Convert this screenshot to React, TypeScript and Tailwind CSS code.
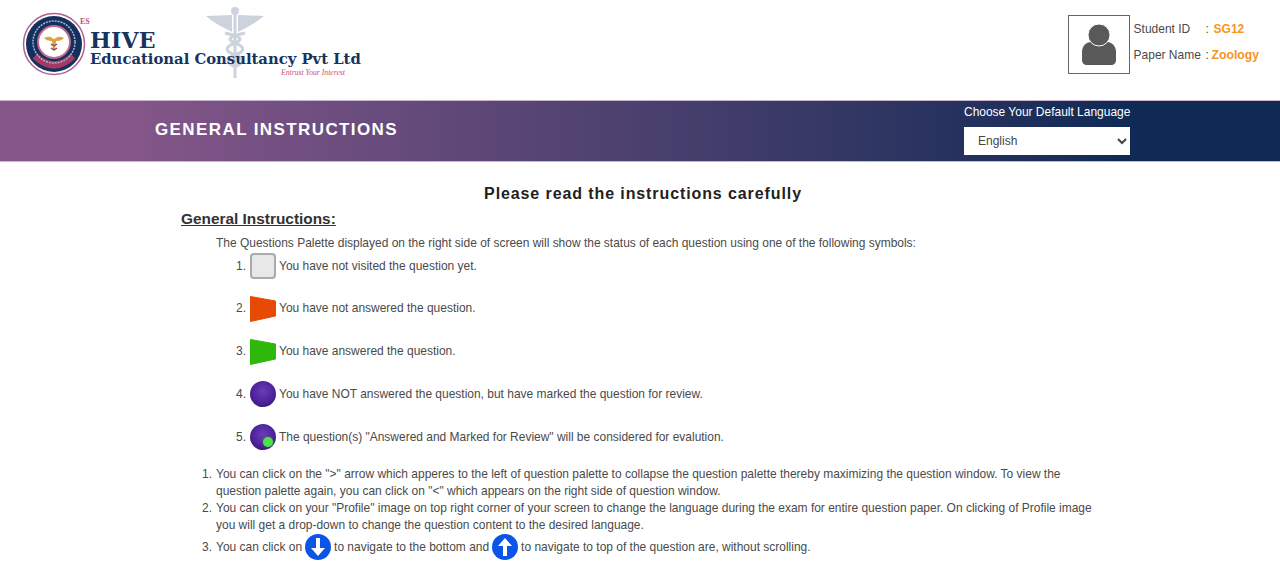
const symbols = [
  { icon: "blank", text: "You have not visited the question yet." },
  { icon: "red", text: "You have not answered the question." },
  { icon: "green", text: "You have answered the question." },
  { icon: "purple", text: "You have NOT answered the question, but have marked the question for review." },
  { icon: "purpleDot", text: 'The question(s) "Answered and Marked for Review" will be considered for evalution.' },
];

const Flag = ({ color }: { color: string }) => (
  <svg width="26" height="26" viewBox="0 0 26 26" className="shrink-0">
    <polygon points="0.5,0.5 25.5,5 25.5,20 0.5,25.5" fill={color} stroke={color} strokeLinejoin="round" />
  </svg>
);

const Ball = ({ dot }: { dot?: boolean }) => (
  <div className="relative h-[26px] w-[26px] shrink-0 rounded-full bg-[radial-gradient(circle_at_50%_40%,#6a3db8,#4a1f96_60%,#2a0f5c)]">
    {dot && (
      <div className="absolute bottom-[3px] right-[3px] h-[10px] w-[10px] rounded-full bg-[#4fe04f] shadow-[0_0_2px_#2f9f3f]" />
    )}
  </div>
);

const SymbolIcon = ({ icon }: { icon: string }) => {
  if (icon === "blank")
    return (
      <div className="h-[26px] w-[26px] shrink-0 rounded-[4px] border-2 border-[#aaaaaa] bg-[#e8e8e8]" />
    );
  if (icon === "red") return <Flag color="#e64a05" />;
  if (icon === "green") return <Flag color="#2eb80c" />;
  return <Ball dot={icon === "purpleDot"} />;
};

const Arrow = ({ up }: { up?: boolean }) => (
  <svg width="26" height="26" viewBox="0 0 26 26" className="mx-[3px] shrink-0">
    <circle cx="13" cy="13" r="13" fill="#0a55e8" />
    {up ? (
      <path d="M13 4l7 8h-5v10h-4V12H6z" fill="#fff" />
    ) : (
      <path d="M13 22l7-8h-5V4h-4v10H6z" fill="#fff" />
    )}
  </svg>
);

const Logo = () => (
  <div className="relative h-[100px] w-[400px] shrink-0">
    <svg width="64" height="64" viewBox="0 0 64 64" className="absolute left-[22px] top-[12px]">
      <circle cx="32" cy="32" r="30.5" fill="#fff" stroke="#b0608f" strokeWidth="1.5" />
      <circle cx="32" cy="32" r="28" fill="#14305e" />
      <path d="M13 44Q32 62 51 44" fill="none" stroke="#a33a63" strokeWidth="7" />
      <circle cx="32" cy="30" r="21" fill="none" stroke="#aab3c8" strokeWidth="1.5" strokeDasharray="2 1" />
      <circle cx="32" cy="30" r="17" fill="#c06a90" />
      <circle cx="32" cy="30" r="15" fill="#fff" />
      <path d="M22 26c6-3 8 0 10 1 2-1 4-4 10-1-3 3-6 3-8 3l-1 10h-2l-1-10c-2 0-5 0-8-3z" fill="#d8a63a" />
      <path d="M29 32c2 2 4 2 6 0M29 36c2 2 4 2 6 0" fill="none" stroke="#8a4a90" strokeWidth="1.5" />
    </svg>
    <span className="absolute left-[80px] top-[17px] font-['Liberation_Serif',serif] text-[8px] font-bold leading-[10px] text-[#c9517f]">
      ES
    </span>
    <svg width="60" height="74" viewBox="0 0 60 74" className="absolute left-[205px] top-[6px]">
      <path d="M1 10L27 9V26C19 22 9 17 1 10zM59 10L33 9V26C41 22 51 17 59 10z" fill="#ccd3dc" />
      <g fill="none" stroke="#ccd3dc">
        <path d="M30 6v66" strokeWidth="3" />
        <path d="M20 27c14 3 20 6 10 10s-11 8 0 12 8 8 0 12M40 27c-14 3-20 6-10 10s11 8 0 12-8 8 0 12" strokeWidth="3" />
      </g>
      <circle cx="30" cy="5" r="4" fill="#ccd3dc" />
    </svg>
    <div className="absolute left-[90px] top-[29px] font-['DejaVu_Serif',serif] font-bold text-[#17335f]">
      <div className="text-[22px] leading-[22px] tracking-[0.2px]">HIVE</div>
      <div className="whitespace-nowrap text-[14.8px] leading-[15px]">
        Educational Consultancy Pvt Ltd
      </div>
    </div>
    <span className="absolute left-[281px] top-[68px] font-['Liberation_Serif',serif] text-[7.7px] italic leading-[10px] text-[#c9517f]">
      Entrust Your Interest
    </span>
  </div>
);

export default function App() {
  return (
    <div className="h-[565px] overflow-hidden bg-white font-['Liberation_Sans',Arial,sans-serif] text-[11.97px] leading-[17px] text-[#4a4a4a]">
      <header className="flex h-[100px] justify-between">
        <Logo />
        <div className="mr-[21px] mt-[15px] flex items-start">
          <div className="flex h-[59px] w-[62px] items-start justify-center border border-[#666666] pt-[8px]">
            <svg width="36" height="42" viewBox="0 0 36 42">
              <path d="M9 18h18c5 1 8 5 8 10v8c0 3-2 5-5 5H6c-3 0-5-2-5-5v-8c0-5 3-9 8-10z" fill="#595959" />
              <circle cx="18" cy="11" r="11" fill="#595959" stroke="#fff" />
            </svg>
          </div>
          <div className="ml-[4px] flex flex-col">
            <div className="mt-[6px] flex h-[17px] items-center">
              <span className="w-[72px]">Student ID</span>
              <span className="w-[8px]">:</span>
              <span className="font-bold text-[#f7941d]">SG12</span>
            </div>
            <div className="mt-[9px] flex h-[17px] items-center">
              <span className="w-[72px]">Paper Name</span>
              <span className="w-[6px]">:</span>
              <span className="text-[12.2px] font-bold text-[#f7941d]">Zoology</span>
            </div>
          </div>
        </div>
      </header>

      <div className="flex h-[62px] items-center justify-between border-y border-[#c9b6cc] bg-gradient-to-r from-[#85568a] from-10% to-[#0f2a55] to-88% pb-[4px] pl-[155px] pr-[150px]">
        <h1 className="text-[17px] font-bold tracking-[1.4px] text-white">GENERAL INSTRUCTIONS</h1>
        <div className="flex w-[166px] flex-col">
          <label className="mb-[6px] whitespace-nowrap text-white">Choose Your Default Language</label>
          <select className="h-[28px] w-[166px] bg-white pl-[10px] text-[12px] text-[#444444]">
            <option>English</option>
          </select>
        </div>
      </div>

      <main className="pl-[181px] pr-[186px]">
        <h2 className="mt-[22px] ml-[11px] text-center text-[16px] font-bold leading-[19px] tracking-[0.9px] text-[#222222]">
          Please read the instructions carefully
        </h2>
        <h3 className="mt-[6px] text-[15.4px] font-bold leading-[19px] text-[#333333] underline">
          General Instructions:
        </h3>
        <p className="ml-[35px] mt-[7px]">
          The Questions Palette displayed on the right side of screen will show the status of each question using one of the following symbols:
        </p>
        <ol className="ml-[55px] mt-[1px] flex flex-col gap-[16.75px]">
          {symbols.map((item, i) => (
            <li key={item.icon} className="flex h-[26px] items-center">
              <span className="w-[14px]">{i + 1}.</span>
              <SymbolIcon icon={item.icon} />
              <span className="ml-[3px]">{item.text}</span>
            </li>
          ))}
        </ol>
        <ol className="ml-[21px] mt-[16px]">
          <li className="flex">
            <span className="w-[14px] shrink-0">1.</span>
            <span>
              You can click on the "&gt;" arrow which apperes to the left of question palette to collapse the question palette thereby maximizing the question window. To view the question palette again, you can click on "&lt;" which appears on the right side of question window.
            </span>
          </li>
          <li className="flex">
            <span className="w-[14px] shrink-0">2.</span>
            <span>
              You can click on your "Profile" image on top right corner of your screen to change the language during the exam for entire question paper. On clicking of Profile image you will get a drop-down to change the question content to the desired language.
            </span>
          </li>
          <li className="flex items-center">
            <span className="w-[14px] shrink-0">3.</span>
            <span>You can click on</span>
            <Arrow />
            <span>to navigate to the bottom and</span>
            <Arrow up />
            <span>to navigate to top of the question are, without scrolling.</span>
          </li>
        </ol>
      </main>
    </div>
  );
}
